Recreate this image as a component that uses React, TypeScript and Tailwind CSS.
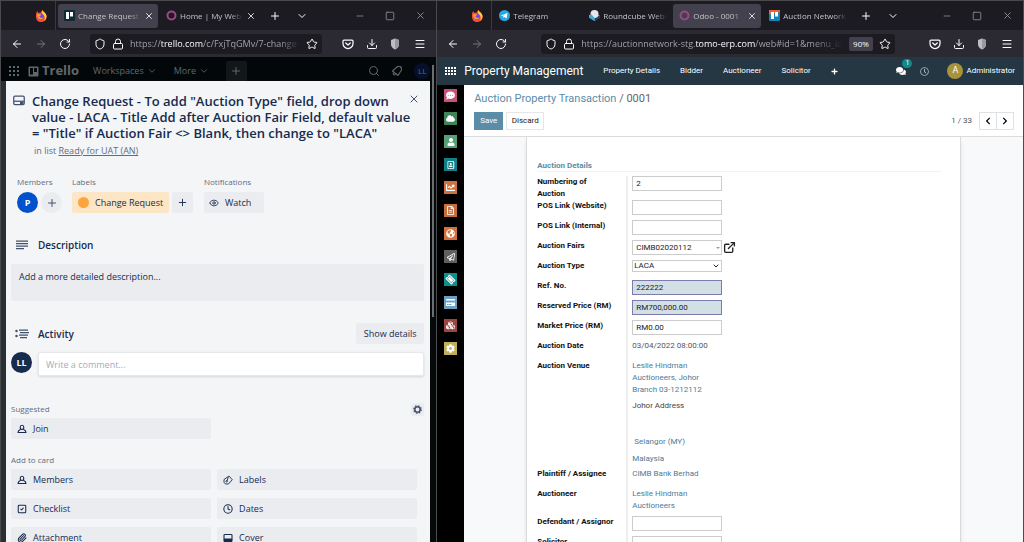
import type { ReactNode } from "react";
import {
  ArrowLeft,
  ArrowRight,
  ChevronDown,
  Clock,
  Download,
  ExternalLink,
  Eye,
  Lock,
  Menu,
  Minus,
  Paperclip,
  Plus,
  RotateCw,
  Search,
  Shield,
  Square,
  SquareCheck,
  Star,
  X,
} from "lucide-react";
import {
  FaChartLine,
  FaChevronLeft,
  FaChevronRight,
  FaCloud,
  FaCog,
  FaComments,
  FaCommentDots,
  FaCreditCard,
  FaCubes,
  FaGlobeAmericas,
  FaPlus,
  FaRegAddressBook,
  FaRegClock,
  FaRegFileAlt,
  FaRegPaperPlane,
  FaTicketAlt,
  FaUser,
} from "react-icons/fa";

type Tab = { title: string; icon: ReactNode; active?: boolean; closable?: boolean };

/* ---------- small drawings ---------- */

function FirefoxLogo() {
  return (
    <svg viewBox="0 0 24 24" className="size-3">
      <path d="M2 9C2 5 4 3 5 2c0 2 1 3 2 4 2-1 3-1 5-1 0-2 1-4 3-5 0 3 7 5 8 12 .4 7-4 12-11 12S1 19 2 9Z" fill="#ff4a37" />
      <path d="M15 0c0 3 7 5 8 12 .3 5-2 8-5 10 3-5 2-10-2-13-3-2-2-7-1-9Z" fill="#ffd035" />
      <circle cx="11.500" cy="13.500" r="6" fill="#7542e5" />
      <path d="M4 9c3-2 5 0 8 0 1 1-1 3-3 3 0 3 4 5 8 3-2 4-7 5-10 2-2-2-3-5-3-8Z" fill="#ff9a2b" />
    </svg>
  );
}

function TrelloFavicon({ blue }: { blue?: boolean }) {
  return (
    <svg viewBox="0 0 22 22" className="size-[11px] shrink-0">
      <rect width="22" height="22" rx="2" fill={blue ? "#1484b8" : "#0d2a35"} />
      {blue && <path d="M0 0h22v4L0 9Z" fill="#e8643c" />}
      <rect x="4" y="4" width="6" height="14" fill="#fff" />
      <rect x="12" y="4" width="6" height="9" fill="#fff" />
    </svg>
  );
}

function OdooFavicon() {
  return (
    <svg viewBox="0 0 22 22" className="size-[11px] shrink-0">
      <circle cx="11" cy="11" r="8" fill="none" stroke="#a24689" strokeWidth="4" />
    </svg>
  );
}

function TelegramFavicon() {
  return (
    <svg viewBox="0 0 22 22" className="size-[11px] shrink-0">
      <circle cx="11" cy="11" r="11" fill="#2ca5e0" />
      <path d="m4 11 13-5-2 11-4-3-2 2-.5-3.500L14 8l-7 4.500Z" fill="#fff" />
    </svg>
  );
}

function RoundcubeFavicon() {
  return (
    <svg viewBox="0 0 22 22" className="size-[11px] shrink-0">
      <path d="M0 10v5l11 7 11-7v-5Z" fill="#37beff" />
      <path d="m11 22 11-7v-5l-11 6Z" fill="#333a40" />
      <circle cx="11" cy="8" r="8" fill="#e4e8ea" />
      <path d="m0 10 5-1 6 7v6L0 15Z" fill="#45a7d8" />
    </svg>
  );
}

function PocketIcon() {
  return (
    <svg viewBox="0 0 24 24" className="size-3" fill="none" stroke="currentColor" strokeWidth="2.500" strokeLinecap="round" strokeLinejoin="round">
      <path d="M4 4h16a2 2 0 0 1 2 2v5a10 10 0 0 1-20 0V6a2 2 0 0 1 2-2Z" />
      <path d="m7.500 10 4.500 4 4.500-4" />
    </svg>
  );
}

function GreyShield() {
  return (
    <svg viewBox="0 0 20 24" className="h-3 w-[10px]">
      <path d="M10 1 18 4v9c0 5-4 8-8 10-4-2-8-5-8-10V4Z" fill="#bdbdc2" />
      <path d="m10 1 8 3v9c0 5-4 8-8 10Z" fill="#98989e" />
    </svg>
  );
}

function CardIcon() {
  return (
    <svg viewBox="0 0 24 22" className="h-[11px] w-3" fill="none" stroke="currentColor" strokeWidth="2.500">
      <rect x="1.500" y="2" width="21" height="17" rx="2.500" />
      <path d="M2 12.500h20" />
      <path d="M14 16h7" strokeWidth="4" />
    </svg>
  );
}

function PersonIcon() {
  return (
    <svg viewBox="0 0 20 20" className="size-[10px]" fill="none" stroke="currentColor" strokeWidth="2.200" strokeLinejoin="round">
      <path d="M10 2.500c2.400 0 3.600 1.800 3.600 4S12.300 11 10 11 6.400 8.700 6.400 6.500s1.200-4 3.600-4Z" />
      <path d="M7.500 10.500C4 12 2 13.500 2 17h16c0-3.500-2-5-5.500-6.500" />
    </svg>
  );
}

function LabelIcon() {
  return (
    <svg viewBox="0 0 20 20" className="size-[10px]" fill="none" stroke="currentColor" strokeWidth="1.800" strokeLinejoin="round">
      <path d="M10.500 3 12 2l6.500 7.500L11 18H5l-3-3.500V9Z" />
      <circle cx="7.500" cy="12.500" r="1.600" />
      <path d="m8.500 11 2-7" />
    </svg>
  );
}

function CoverIcon() {
  return (
    <svg viewBox="0 0 20 20" className="size-[10px]" fill="none" stroke="currentColor" strokeWidth="2.200">
      <rect x="2" y="3" width="16" height="14" rx="1.500" />
      <path d="M2 13.500h16" strokeWidth="5" />
    </svg>
  );
}

function TextLinesIcon() {
  return (
    <svg viewBox="0 0 24 20" className="h-[10px] w-3" stroke="currentColor" strokeWidth="2.500">
      <path d="M0 2h24M0 7h24M0 12h24M0 17h16" />
    </svg>
  );
}

function ActivityIcon() {
  return (
    <svg viewBox="0 0 28 20" className="h-[10px] w-[14px]" stroke="currentColor" strokeWidth="2.500">
      <path d="M8 2h18M10 7h18M8 12h18M10 17h14" />
      <circle cx="3" cy="4" r="2.500" fill="currentColor" stroke="none" />
      <circle cx="3" cy="14" r="2.500" fill="currentColor" stroke="none" />
    </svg>
  );
}

function GridDots({ className }: { className: string }) {
  return (
    <svg viewBox="0 0 10 10" className={className} fill="currentColor">
      {[0, 4, 8].map((y) => [0, 4, 8].map((x) => <rect key={`${x}-${y}`} x={x} y={y} width="2" height="2" />))}
    </svg>
  );
}

function AppsGrid() {
  return (
    <svg viewBox="0 0 11 9" className="h-[9px] w-[11px]" fill="currentColor">
      {[0, 3, 6].map((y) => [0, 3, 6, 9].map((x) => <rect key={`${x}-${y}`} x={x} y={y} width="2" height="2" />))}
    </svg>
  );
}

/* ---------- browser window ---------- */

function BrowserChrome({
  tabs,
  tabClass,
  barClass,
  zoom,
  children,
}: {
  tabs: Tab[];
  tabClass: string;
  barClass: string;
  zoom?: string;
  children: ReactNode;
}) {
  return (
    <header className="shrink-0 border-t border-[#4b4b4e] font-['Open_Sans','Noto_Sans',sans-serif] text-[#fbfbfe]">
      <div className="flex h-[29px] items-center bg-[#1c1b22]">
        <div className="flex h-full w-[55px] shrink-0 items-center justify-end border-r border-[#3a3940] pr-2">
          <FirefoxLogo />
        </div>
        <div className={tabClass}>
          {tabs.map((tab) => (
            <div
              key={tab.title}
              className={`flex h-6 min-w-0 flex-1 items-center gap-[3px] rounded-[3px] pr-1 pl-[6px] text-[8px] ${tab.active ? "bg-[#42414d]" : ""}`}
            >
              {tab.icon}
              <span className="min-w-0 flex-1 overflow-hidden whitespace-nowrap text-[#c3c3c8] [mask-image:linear-gradient(to_right,black_80%,transparent)]">
                {tab.title}
              </span>
              {tab.closable && (
                <button aria-label={`Close ${tab.title}`}>
                  <X size={10} />
                </button>
              )}
            </div>
          ))}
        </div>
        <button aria-label="New tab" className="ml-[9px]">
          <Plus size={12} />
        </button>
        <button aria-label="List tabs" className="ml-[15px]">
          <ChevronDown size={12} />
        </button>
        <div className="ml-auto flex gap-5 pr-[10px] text-[#8f8f96]">
          <button aria-label="Minimize">
            <Minus size={10} />
          </button>
          <button aria-label="Maximize">
            <Square size={10} />
          </button>
          <button aria-label="Close window">
            <X size={11} />
          </button>
        </div>
      </div>

      <div className="flex h-[27px] items-center bg-[#2b2a33]">
        <div className="flex shrink-0 gap-3 pl-2.5">
          <button aria-label="Back">
            <ArrowLeft size={12} />
          </button>
          <button aria-label="Forward" className="text-[#77767e]">
            <ArrowRight size={12} />
          </button>
          <button aria-label="Reload">
            <RotateCw size={12} />
          </button>
        </div>
        <div className={barClass}>
          <Shield size={12} className="shrink-0" />
          <Lock size={12} className="shrink-0" />
          <span className="min-w-0 flex-1 overflow-hidden whitespace-nowrap text-[9px] text-[#a0a0a6] [mask-image:linear-gradient(to_right,black_88%,transparent)]">
            {children}
          </span>
          {zoom && (
            <button className="h-[14px] w-6 shrink-0 rounded-[2px] bg-[#42414d] text-center text-[8px] leading-[14px]">{zoom}</button>
          )}
          <button aria-label="Bookmark this page" className="shrink-0">
            <Star size={12} />
          </button>
        </div>
        <div className="flex shrink-0 items-center gap-3 pr-2.5">
          <button aria-label="Save to Pocket">
            <PocketIcon />
          </button>
          <button aria-label="Downloads">
            <Download size={12} />
          </button>
          <button aria-label="Extension" className="w-3">
            <GreyShield />
          </button>
          <button aria-label="Open menu">
            <Menu size={12} />
          </button>
        </div>
      </div>
    </header>
  );
}

/* ---------- Trello ---------- */

function SideButton({ icon, children }: { icon: ReactNode; children: ReactNode }) {
  return (
    <button className="flex h-[21px] items-center gap-[6px] rounded-[2px] bg-[#ebecf0] px-[6px] text-left">
      {icon}
      {children}
    </button>
  );
}

function TrelloHeader() {
  return (
    <nav className="flex h-6 shrink-0 items-end bg-[#02080a] pl-2 text-[#62676b]">
      <div className="flex h-5 flex-1 items-center text-[9px]">
        <button aria-label="Apps" className="mr-[9px]">
          <GridDots className="size-[10px]" />
        </button>
        <svg viewBox="0 0 22 22" className="mr-[3px] size-[11px]">
          <path fill="currentColor" fillRule="evenodd" d="M3 1h16a2 2 0 0 1 2 2v16a2 2 0 0 1-2 2H3a2 2 0 0 1-2-2V3a2 2 0 0 1 2-2Zm1 3v13h6V4Zm8 0v8h6V4Z" />
        </svg>
        <span className="text-[13px] font-bold">Trello</span>
        <button className="ml-3.5 flex items-center gap-[3px]">
          Workspaces <ChevronDown size={10} />
        </button>
        <button className="ml-[17px] flex items-center gap-[3px]">
          More <ChevronDown size={10} />
        </button>
        <button aria-label="Create" className="ml-[17px] flex h-5 w-[21px] items-center justify-center rounded-t-[2px] bg-[#121719]">
          <Plus size={12} />
        </button>
        <div className="ml-auto flex items-center gap-[11px]">
          <button aria-label="Search">
            <Search size={12} />
          </button>
          <button aria-label="Notifications">
            <svg viewBox="0 0 24 24" className="size-3" fill="none" stroke="currentColor" strokeWidth="2.200" strokeLinejoin="round">
              <path d="M3 12 13 3c4-2 9 2 8 7l-7 11Z" />
              <path d="M5 15c-2 3 1 6 4 4M21 3l-2 2" />
            </svg>
          </button>
          <span className="flex size-4 items-center justify-center rounded-full bg-[#07102a] text-[8px]">LL</span>
        </div>
      </div>
    </nav>
  );
}

function TrelloCard() {
  return (
    <article className="min-h-0 flex-1 overflow-hidden bg-[#f4f5f7] pr-[6px] pl-[5px] text-[9px] leading-[14px] text-[#172b4d]">
      <div className="flex pt-3">
        <span className="w-[21px] shrink-0 pl-0.5 pt-0.5 text-[#42526e]">
          <CardIcon />
        </span>
        <div className="min-w-0 flex-1">
          <h1 className="text-[13px] leading-4 font-semibold whitespace-nowrap">
            Change Request - To add "Auction Type" field, drop down
            <br />
            value - LACA - Title Add after Auction Fair Field, default value
            <br />= "Title" if Auction Fair &lt;&gt; Blank, then change to "LACA"
          </h1>
          <p className="mt-[3px] pl-0.5 text-[#5e6c84]">
            in list{" "}
            <a href="#list" className="underline">
              Ready for UAT (AN)
            </a>
          </p>
        </div>
        <button aria-label="Close card" className="mr-1 h-3 self-start text-[#42526e]">
          <X size={12} strokeWidth={2} />
        </button>
      </div>

      <div className="mt-[17px] flex pl-[6px]">
        <section>
          <h2 className="mb-[3px] h-[14px] text-[8px] text-[#5e6c84]">Members</h2>
          <div className="flex w-[55px] gap-[3px]">
            <span className="flex size-[21px] items-center justify-center rounded-full bg-[#0052cc] font-bold text-white">P</span>
            <button aria-label="Add member" className="flex size-[21px] items-center justify-center rounded-full bg-[#ebecf0] text-[#42526e]">
              <Plus size={12} strokeWidth={2} />
            </button>
          </div>
        </section>
        <section>
          <h2 className="mb-[3px] h-[14px] text-[8px] text-[#5e6c84]">Labels</h2>
          <div className="flex w-[132px] gap-[3px]">
            <button className="flex h-[21px] items-center gap-[6px] rounded-[2px] bg-[#fce6c6] px-[6px] whitespace-nowrap">
              <span className="size-[11px] rounded-full bg-[#faa53d]" />
              Change Request
            </button>
            <button aria-label="Add label" className="flex size-[21px] items-center justify-center rounded-[2px] bg-[#ebecf0]">
              <Plus size={11} strokeWidth={2} />
            </button>
          </div>
        </section>
        <section>
          <h2 className="mb-[3px] h-[14px] text-[8px] text-[#5e6c84]">Notifications</h2>
          <button className="flex h-[21px] w-[60px] items-center gap-[6px] rounded-[2px] bg-[#ebecf0] px-[5px]">
            <Eye size={10} />
            Watch
          </button>
        </section>
      </div>

      <section className="mt-[25px]">
        <div className="flex h-[14px] items-center">
          <span className="w-[27px] pl-[5px] text-[#42526e]">
            <TextLinesIcon />
          </span>
          <h2 className="text-[10px] font-semibold">Description</h2>
        </div>
        <button className="mt-3 flex h-[37px] w-full items-start rounded-[2px] bg-[#ebecf0] px-2 pt-[6px] text-left">
          Add a more detailed description...
        </button>
      </section>

      <section className="mt-[22px]">
        <div className="flex h-[21px] items-center">
          <span className="w-[27px] pl-1 text-[#42526e]">
            <ActivityIcon />
          </span>
          <h2 className="text-[10px] font-semibold">Activity</h2>
          <button className="ml-auto h-[21px] w-[68px] rounded-[2px] bg-[#ebecf0] whitespace-nowrap">Show details</button>
        </div>
        <div className="mt-2 flex gap-[6px]">
          <span className="flex size-[21px] shrink-0 items-center justify-center rounded-full bg-[#172b4d] font-bold text-white">LL</span>
          <input
            aria-label="Write a comment"
            placeholder="Write a comment…"
            className="h-6 min-w-0 flex-1 rounded-[2px] border border-[#e6e8ec] bg-white px-[7px] shadow-sm placeholder:text-[#a5adba]"
          />
        </div>
      </section>

      <section className="mt-[26px]">
        <div className="flex h-[14px] items-center justify-between text-[8px] text-[#5e6c84]">
          <h2>Suggested</h2>
          <button aria-label="Suggestion settings" className="flex size-[13px] items-center justify-center rounded-[2px] bg-[#ebecf0] text-[#42526e]">
            <svg viewBox="0 0 20 20" className="size-[9px]" fill="none" stroke="currentColor">
              <circle cx="10" cy="10" r="6" strokeWidth="3.500" />
              <circle cx="10" cy="10" r="8.500" strokeWidth="2.500" strokeDasharray="3.300 3.370" />
            </svg>
          </button>
        </div>
        <div className="mt-0.5 grid grid-cols-2 gap-x-[6px] pr-[7px]">
          <SideButton icon={<PersonIcon />}>Join</SideButton>
        </div>
      </section>

      <section className="mt-[14px]">
        <h2 className="text-[8px] text-[#5e6c84]">Add to card</h2>
        <div className="mt-0.5 grid grid-cols-2 gap-x-[6px] gap-y-2 pr-[7px]">
          <SideButton icon={<PersonIcon />}>Members</SideButton>
          <SideButton icon={<LabelIcon />}>Labels</SideButton>
          <SideButton icon={<SquareCheck size={10} strokeWidth={2.5} />}>Checklist</SideButton>
          <SideButton icon={<Clock size={10} strokeWidth={2.5} />}>Dates</SideButton>
          <SideButton icon={<Paperclip size={10} strokeWidth={2.5} />}>Attachment</SideButton>
          <SideButton icon={<CoverIcon />}>Cover</SideButton>
        </div>
      </section>
    </article>
  );
}

/* ---------- Odoo ---------- */

const APPS = [
  { name: "Discuss", color: "bg-[#c6527c]", icon: <FaCommentDots size={9} /> },
  { name: "Cloud", color: "bg-[#3f8456]", icon: <FaCloud size={9} /> },
  { name: "Contacts", color: "bg-[#57a077]", icon: <FaUser size={8} /> },
  { name: "Address Book", color: "bg-[#128088]", icon: <FaRegAddressBook size={8} /> },
  { name: "Sales", color: "bg-[#cf7040]", icon: <FaChartLine size={9} /> },
  { name: "Invoicing", color: "bg-[#c66f3d]", icon: <FaRegFileAlt size={9} /> },
  { name: "Website", color: "bg-[#d5713c]", icon: <FaGlobeAmericas size={9} /> },
  { name: "Email Marketing", color: "bg-[#5f5f5f]", icon: <FaRegPaperPlane size={8} /> },
  { name: "Events", color: "bg-[#128e8c]", icon: <FaTicketAlt size={9} className="rotate-45" /> },
  { name: "Payments", color: "bg-[#6ba0c4]", icon: <FaCreditCard size={9} /> },
  { name: "Apps", color: "bg-[#9c4444]", icon: <FaCubes size={9} /> },
  { name: "Settings", color: "bg-[#bfae5c]", icon: <FaCog size={9} /> },
];

const INPUT = "block h-[15px] w-[90px] border border-[#ccc] bg-white px-[3px] text-[8px] text-[#222]";
const REQUIRED = "block h-[15px] w-[90px] border border-[#7c7bad] bg-[#d2dfe5] px-[3px] text-[8px] text-[#222]";

function Field({ id, label, height = "h-5", children }: { id?: string; label: ReactNode; height?: string; children: ReactNode }) {
  return (
    <div className={`flex ${height}`}>
      <div className="w-[91px] shrink-0 border-r-2 border-[#eee] font-bold text-[#111]">
        {id ? (
          <label htmlFor={id} className="block">
            {label}
          </label>
        ) : (
          label
        )}
      </div>
      <div className="pl-1">{children}</div>
    </div>
  );
}

function PropertyForm() {
  return (
    <div className="pl-[10px] text-[8px] leading-3">
      <h2 className="mr-[19px] mb-1 h-3 border-b border-[#f3f3f3] text-[#5b8da8] font-bold">Auction Details</h2>
      <Field
        id="numbering"
        label={
          <>
            Numbering of
            <br />
            Auction
          </>
        }
        height="h-6"
      >
        <input id="numbering" defaultValue="2" className={INPUT} />
      </Field>
      <Field id="pos-website" label="POS Link (Website)">
        <input id="pos-website" className={INPUT} />
      </Field>
      <Field id="pos-internal" label="POS Link (Internal)">
        <input id="pos-internal" className={INPUT} />
      </Field>
      <Field id="fairs" label="Auction Fairs">
        <div className="flex items-center gap-px">
          <div className="relative">
            <input id="fairs" defaultValue="CIMB02020112" className={INPUT} />
            <span className="absolute right-0.5 top-[7px] border-x-2 border-t-2 border-x-transparent border-t-[#999]" />
          </div>
          <button aria-label="Open record" className="text-[#222]">
            <ExternalLink size={13} strokeWidth={2.5} />
          </button>
        </div>
      </Field>
      <Field id="type" label="Auction Type">
        <div className="relative">
          <select id="type" defaultValue="LACA" className="block h-3 w-[90px] appearance-none border border-[#ccc] bg-white px-px text-[8px] leading-[10px] text-[#222]">
            <option>LACA</option>
            <option>Title</option>
          </select>
          <ChevronDown size={8} strokeWidth={3} className="pointer-events-none absolute right-0.5 top-0.5 text-[#222]" />
        </div>
      </Field>
      <Field id="ref" label="Ref. No.">
        <input id="ref" defaultValue="222222" className={REQUIRED} />
      </Field>
      <Field id="reserved" label="Reserved Price (RM)">
        <input id="reserved" defaultValue="RM700,000.00" className={REQUIRED} />
      </Field>
      <Field id="market" label="Market Price (RM)">
        <input id="market" defaultValue="RM0.00" className={INPUT} />
      </Field>
      <Field label="Auction Date">
        <span className="text-[#555]">03/04/2022 08:00:00</span>
      </Field>
      <Field label="Auction Venue" height="h-[108px]">
        <div className="flex w-[76px] flex-col text-[#4f7a96]">
          <a href="#venue">Leslie Hindman Auctioneers, Johor Branch 03-1212112</a>
          <span className="mt-1 text-[#444]">Johor Address</span>
          <a href="#state" className="mt-6 pl-0.5">
            Selangor (MY)
          </a>
          <a href="#country" className="mt-[5px]">
            Malaysia
          </a>
        </div>
      </Field>
      <Field label="Plaintiff / Assignee">
        <a href="#plaintiff" className="text-[#4f7a96]">
          CIMB Bank Berhad
        </a>
      </Field>
      <Field label="Auctioneer" height="h-7">
        <a href="#auctioneer" className="block w-[70px] text-[#4f7a96]">
          Leslie Hindman Auctioneers
        </a>
      </Field>
      <Field id="defendant" label="Defendant / Assignor">
        <input id="defendant" className={INPUT} />
      </Field>
      <Field id="solicitor" label="Solicitor">
        <input id="solicitor" className={INPUT} />
      </Field>
    </div>
  );
}

function OdooPage() {
  return (
    <div className="flex min-h-0 flex-1 flex-col font-[Roboto,sans-serif] text-[8px]">
      <nav className="flex h-7 shrink-0 items-center bg-[#243742] pl-2 pr-2 text-white">
        <button aria-label="Applications">
          <AppsGrid />
        </button>
        <span className="ml-2 text-[12px]">Property Management</span>
        <div className="ml-5 flex items-center gap-5">
          <a href="#details">Property Details</a>
          <a href="#bidder">Bidder</a>
          <a href="#auctioneer">Auctioneer</a>
          <a href="#solicitor">Solicitor</a>
          <button aria-label="More menus">
            <FaPlus size={7} />
          </button>
        </div>
        <div className="ml-auto flex items-center">
          <button aria-label="Messages" className="relative mr-3 w-3">
            <FaComments size={10} />
            <span className="absolute -top-[7px] left-[6px] flex h-[9px] w-[10px] items-center justify-center rounded-full bg-[#0f8a8a] text-[7px]">1</span>
          </button>
          <button aria-label="Activities" className="mr-[18px] text-[#a5afb5]">
            <FaRegClock size={9} />
          </button>
          <button className="flex items-center gap-[3px]">
            <span className="flex size-4 items-center justify-center rounded-full bg-[#a8923c] text-[9px]">A</span>
            Administrator
          </button>
        </div>
      </nav>

      <div className="flex min-h-0 flex-1">
        <aside className="flex w-[27px] shrink-0 flex-col items-center gap-[10px] bg-black pt-1">
          {APPS.map((app) => (
            <button key={app.name} aria-label={app.name} className={`flex size-[13px] shrink-0 items-center justify-center text-white ${app.color}`}>
              {app.icon}
            </button>
          ))}
        </aside>

        <div className="flex min-w-0 flex-1 flex-col">
          <div className="z-10 shrink-0 border-b border-[#dcdcdc] bg-white pt-[6px] pr-[9px] pb-[6px] pl-[10px]">
            <div className="text-[11px] leading-4 text-[#666]">
              <a href="#transactions" className="text-[#5b8da8]">
                Auction Property Transaction
              </a>{" "}
              / 0001
            </div>
            <div className="mt-[5px] flex items-center gap-[3px]">
              <button className="h-[18px] w-[29px] bg-[#5b8da8] text-white">Save</button>
              <button className="h-[18px] w-[38px] border border-[#e6e6e6] text-[#222]">Discard</button>
              <span className="ml-auto mr-1 text-[#555]">1 / 33</span>
              <div className="flex h-[18px] border border-[#dee2e6] text-black">
                <button aria-label="Previous" className="flex w-[17px] items-center justify-center border-r border-[#dee2e6]">
                  <FaChevronLeft size={8} />
                </button>
                <button aria-label="Next" className="flex w-4 items-center justify-center">
                  <FaChevronRight size={8} />
                </button>
              </div>
            </div>
          </div>
          <main className="min-h-0 flex-1 overflow-hidden bg-[#f8f9fa] px-[62px]">
            <div className="min-h-full border-x border-[#dadada] bg-white pt-[23px] shadow-md">
              <PropertyForm />
            </div>
          </main>
        </div>
      </div>
    </div>
  );
}

export default function App() {
  return (
    <div className="flex h-screen overflow-hidden bg-black">
      <div className="flex w-[42.6%] shrink-0 flex-col border-l border-[#4b4b4e] font-['Open_Sans','Noto_Sans',sans-serif]">
        <BrowserChrome
          tabClass="ml-0.5 flex w-[202px] gap-0.5"
          barClass="mr-5 ml-[19px] flex h-5 min-w-0 flex-1 items-center gap-[6px] rounded-[3px] bg-[#1c1b22] px-1"
          tabs={[
            { title: "Change Request - To", icon: <TrelloFavicon />, active: true, closable: true },
            { title: "Home | My Website", icon: <OdooFavicon />, closable: true },
          ]}
        >
          https://<span className="text-[#fbfbfe]">trello.com</span>/c/FxjTqGMv/7-change-r
        </BrowserChrome>
        <div className="flex min-h-0 flex-1 bg-[#0b1113]">
          <div className="flex min-w-0 flex-1 flex-col">
            <TrelloHeader />
            <div className="flex min-h-0 flex-1 bg-[#283034] pl-[5px]">
              <TrelloCard />
            </div>
          </div>
          <div className="flex w-[6px] shrink-0 justify-center bg-[#05090a] pt-2">
            <div className="h-[252px] w-0.5 bg-[#6b6e70]" />
          </div>
        </div>
      </div>

      <div className="flex min-w-0 flex-1 flex-col border-x border-[#4b4b4e]">
        <BrowserChrome
          zoom="90%"
          tabClass="ml-px flex w-[358px] gap-0.5"
          barClass="mr-[34px] ml-[34px] flex h-5 min-w-0 flex-1 items-center gap-[6px] rounded-[3px] bg-[#1c1b22] px-1"
          tabs={[
            { title: "Telegram", icon: <TelegramFavicon /> },
            { title: "Roundcube Webm", icon: <RoundcubeFavicon /> },
            { title: "Odoo - 0001", icon: <OdooFavicon />, active: true, closable: true },
            { title: "Auction Network", icon: <TrelloFavicon blue /> },
          ]}
        >
          https://auctionnetwork-stg.<span className="text-[#fbfbfe]">tomo-erp.com</span>/web#id=1&amp;menu_id=
        </BrowserChrome>
        <OdooPage />
      </div>
    </div>
  );
}
